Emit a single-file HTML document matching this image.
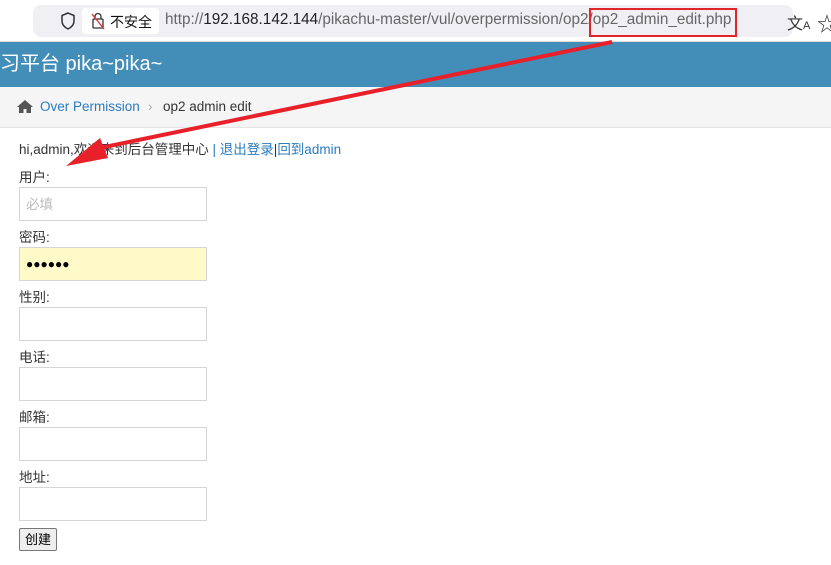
<!DOCTYPE html>
<html><head><meta charset="utf-8"><style>
body{margin:0;width:831px;height:565px;overflow:hidden;background:#fff;font-family:"Liberation Sans","Noto Sans CJK SC",sans-serif;position:relative}
.top{position:absolute;left:0;top:0;width:831px;height:41px;background:#fff;border-bottom:1px solid #ddd}
.addr{position:absolute;left:33px;top:5px;width:760px;height:32px;background:#f0f0f4;border-radius:8px}
.sec{position:absolute;left:82px;top:8px;width:77px;height:26px;background:#fff;border-radius:4px}
.sectx{position:absolute;left:110px;top:12px;font-size:14px;color:#111}
.url{position:absolute;left:165px;top:11px;font-size:15.3px;color:#666;white-space:nowrap}
.url b{font-weight:normal;color:#222}
.box{position:absolute;left:589px;top:8px;width:148px;height:29px;border:2px solid #e0242a;box-sizing:border-box}
.hdr{position:absolute;left:0;top:42px;width:831px;height:45px;background:#438eb9;color:#fff;font-size:20px;line-height:45px}
.bc{position:absolute;left:0;top:87px;width:831px;height:40px;background:#f5f5f5;border-bottom:1px solid #e5e5e5;font-size:13.5px;line-height:40px}
.c{position:absolute;left:19px;font-size:13.5px;color:#333}
input{position:absolute;left:19px;width:188px;height:34px;border:1px solid #d5d5d5;box-sizing:border-box;margin:0;padding:0 0 0 0;font-size:13.5px;font-family:inherit}
input::placeholder{color:#bbb}
a{color:#2a7bbf;text-decoration:none}
</style></head><body>
<div class="top"><div class="addr"></div>
<svg style="position:absolute;left:60px;top:12px" width="16" height="18"><path d="M8 1L2 3.5V9c0 4 3 6.5 6 8 3-1.5 6-4 6-8V3.5z" fill="none" stroke="#333" stroke-width="1.5"/></svg>
<div class="sec"></div>
<svg style="position:absolute;left:91px;top:12px" width="14" height="18"><rect x="2" y="7" width="10" height="9" rx="1" fill="none" stroke="#333" stroke-width="1.3"/><path d="M4 7V4.5a3 3 0 016 0V7" fill="none" stroke="#333" stroke-width="1.3"/><path d="M1 2l12 15" stroke="#d33" stroke-width="1.4"/></svg>
<div class="sectx">不安全</div>
<div class="url">http://<b>192.168.142.144</b>/pikachu-master/vul/overpermission/op2/op2_admin_edit.php</div>
<div class="box"></div>
<div style="position:absolute;left:787px;top:10px;font-size:16px;color:#333">文<span style="font-size:11px">A</span></div>
<div style="position:absolute;left:817px;top:8px;font-size:20px;color:#333">☆</div>
</div>
<div class="hdr">习平台 pika~pika~</div>
<div class="bc"><svg style="position:absolute;left:16px;top:12px" width="18" height="15"><path d="M9 1L1 8h2v6h4.5v-4h3v4H15V8h2z" fill="#555"/></svg><a style="position:absolute;left:40px">Over Permission</a><span style="position:absolute;left:148px;color:#aaa">›</span><span style="position:absolute;left:163px;color:#333">op2 admin edit</span></div>
<div class="c" style="top:138px">hi,admin,欢迎来到后台管理中心 <a>| 退出登录</a>|<a>回到admin</a></div>
<div class="c" style="top:166px">用户:</div><input style="top:187px;padding-left:6px" placeholder="必填">
<div class="c" style="top:226px">密码:</div><input style="top:247px;background:#fffac8;padding-left:6px;font-size:12px" value="●●●●●●">
<div class="c" style="top:286px">性别:</div><input style="top:307px">
<div class="c" style="top:346px">电话:</div><input style="top:367px">
<div class="c" style="top:406px">邮箱:</div><input style="top:427px">
<div class="c" style="top:466px">地址:</div><input style="top:487px">
<div style="position:absolute;left:19px;top:528px;width:36px;height:21px;border:1px solid #777;border-radius:2px;background:#eee;font-size:13px;line-height:21px;text-align:center">创建</div>
<svg style="position:absolute;left:0;top:0" width="831" height="565"><path d="M612 42L90 150" stroke="#e8202a" stroke-width="4"/><polygon points="66,166 100,138 108,158" fill="#e8202a"/></svg>
</body></html>
